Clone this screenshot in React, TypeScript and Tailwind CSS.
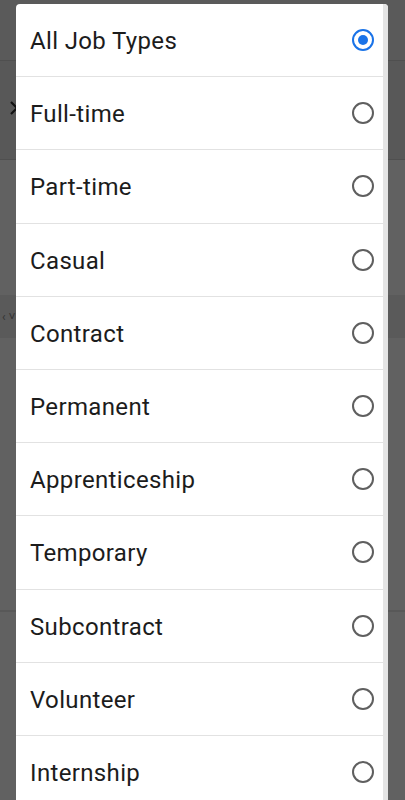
import { useState } from 'react';

const jobTypes = [
  'All Job Types',
  'Full-time',
  'Part-time',
  'Casual',
  'Contract',
  'Permanent',
  'Apprenticeship',
  'Temporary',
  'Subcontract',
  'Volunteer',
  'Internship',
];

// Dimmed page that sits behind the picker dialog.
const Backdrop = () => (
  <div className="flex flex-col h-[800px] bg-[#616161]">
    <div className="h-[60px] bg-[#5a5a5a]" />
    <div className="h-[100px] bg-[#585858] border-y border-[#4f4f4f] flex items-center justify-between pl-[9px] pr-[12px]">
      <svg width="10" height="16" viewBox="0 0 10 16" className="mt-[-4px]">
        <polyline points="2,2 8,8 2,14" fill="none" stroke="#111" strokeWidth="2.2" />
      </svg>
      <span className="text-[#222] text-[16px] leading-none">⋮</span>
    </div>
    <div className="h-[135px]" />
    <div className="h-[43px] bg-[#5a5a5a] flex items-center px-[2px] text-[#333] text-[12px]">‹ ˅</div>
    <div className="h-[272px]" />
    <div className="h-[2px] bg-[#585858]" />
    <div className="flex-1" />
  </div>
);

export default function App() {
  const [selected, setSelected] = useState('All Job Types');

  return (
    <div className="relative w-[405px] h-[800px] overflow-hidden font-['Roboto',sans-serif]">
      <Backdrop />

      <div className="absolute left-[16px] top-[4px] w-[372px] h-[820px] bg-white rounded-t-[4px] overflow-hidden flex">
        <div className="flex-1 flex flex-col">
          {jobTypes.map((t) => {
            const on = t === selected;
            return (
              <button
                key={t}
                onClick={() => setSelected(t)}
                className="h-[73.2px] shrink-0 flex items-center justify-between pl-[14px] pr-[9px] border-b border-[#e2e2e2] text-left"
              >
                <span className="text-[24px] leading-none pt-[2px] tracking-[0.35px] text-[#1c1c1c]">{t}</span>
                {on ? (
                  <span className="w-[22px] h-[22px] rounded-full border-2 border-[#1a73e8] flex items-center justify-center">
                    <span className="w-[10px] h-[10px] rounded-full bg-[#1a73e8]" />
                  </span>
                ) : (
                  <span className="w-[22px] h-[22px] rounded-full border-2 border-[#5f5f5f]" />
                )}
              </button>
            );
          })}
        </div>
        <div className="w-[5px] bg-[#e4e4e4]" />
      </div>
    </div>
  );
}
